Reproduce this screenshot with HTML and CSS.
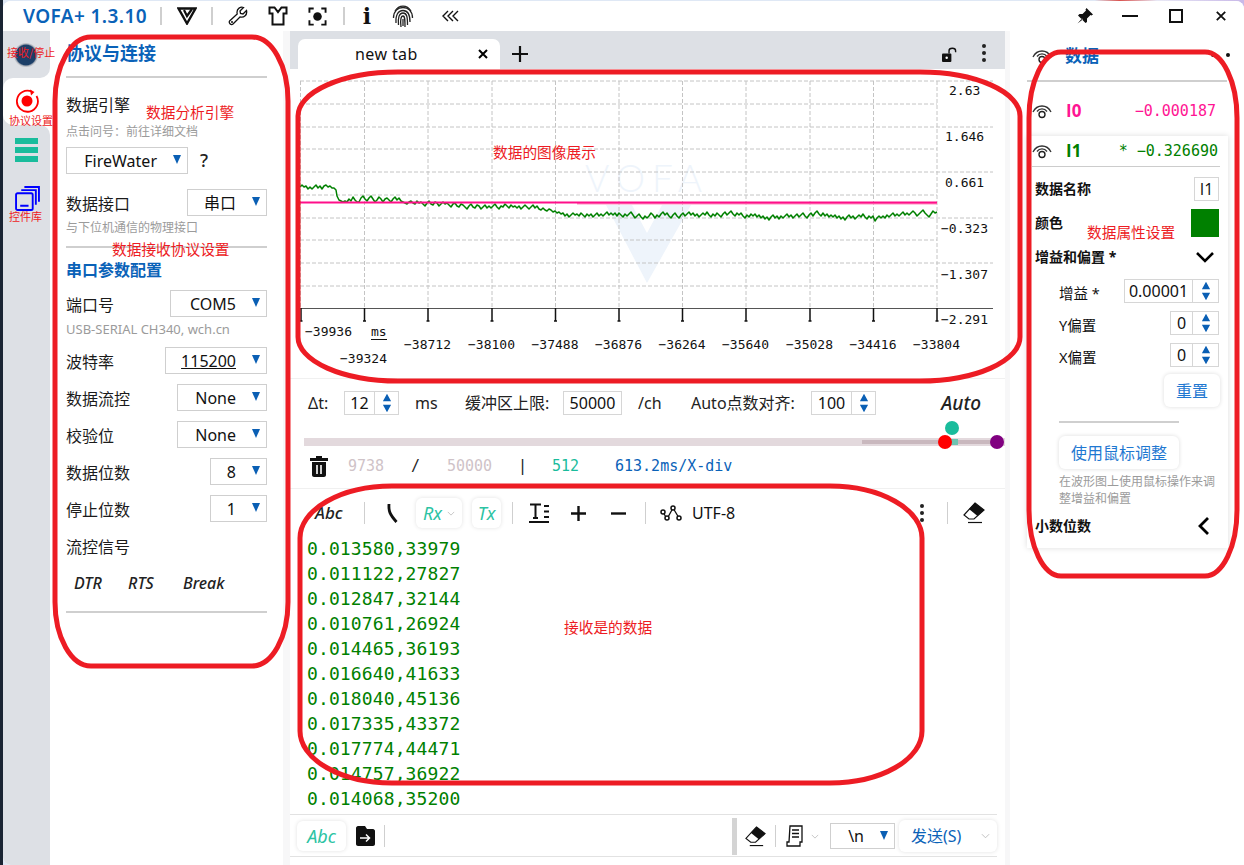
FILE: index.html
```html
<!DOCTYPE html>
<html lang="zh">
<head>
<meta charset="utf-8">
<title>VOFA+</title>
<link rel="stylesheet" href="styles.css">
</head>
<body>
<svg class="defs" width="0" height="0">
  <symbol id="eye" viewBox="0 0 20 16"><path d="M1 9C5 1 15 1 19 9M5 8.5C7.5 5 12.500 5 15 8.500" fill="none" stroke="#333" stroke-width="1.300"/><circle cx="10" cy="11.500" r="3" fill="none" stroke="#222" stroke-width="1.400"/></symbol>
  <symbol id="arrows" viewBox="0 0 10 24"><path d="M5 2 9.500 10H.5ZM5 22 .5 14H9.500Z" fill="#0a5fb4"/></symbol>
  <symbol id="eraser" viewBox="0 0 22 22"><path d="M12 1 21 8 11 17 6 17 1 13Z" fill="#fff" stroke="#111" stroke-width="1.200"/><path d="M12 1 21 8 14.500 14 6 7Z" fill="#111"/><path d="M5 20.500H19" stroke="#111" stroke-width="1.200"/></symbol>
  <symbol id="chev" viewBox="0 0 10 6"><path d="M1 1 5 5 9 1" fill="none" stroke="#bbb" stroke-width="1"/></symbol>
</svg>
<div class="window">
  <header class="titlebar">
    <span class="brand">VOFA+ 1.3.10</span>
    <span class="tsep s1"></span>
    <svg class="ti v-logo" viewBox="0 0 20 18"><path d="M1.500 1.500H18.500L10 16.500Z" fill="none" stroke="#111" stroke-width="2.400"/><path d="M7 3 10 9 15 2" fill="none" stroke="#111" stroke-width="2.200"/></svg>
    <span class="tsep s2"></span>
    <svg class="ti wrench" viewBox="0 0 20 20"><path d="M18.500 4.500 15 8 12.500 7.500 12 5 15.500 1.500C12.500.5 8.800 2.500 9 6.500L9.200 8 1.800 14.800C0 16.500 3 19.800 5 18L12 11C16 12 19.500 9 18.500 4.500Z" fill="none" stroke="#111" stroke-width="1.300"/><circle cx="4" cy="16" r="1" fill="#111"/></svg>
    <svg class="ti shirt" viewBox="0 0 20 20"><path d="M6.500 1.500H1.500V7.500H4.500V18.500H15.500V7.500H18.500V1.500H13.500L10 6Z" fill="none" stroke="#111" stroke-width="2"/></svg>
    <svg class="ti focus" viewBox="0 0 20 20"><path d="M1.500 6V1.500H6M14 1.500H18.500V6M18.500 14V18.500H14M6 18.500H1.500V14" fill="none" stroke="#111" stroke-width="2"/><circle cx="10" cy="10" r="4.500" fill="#111"/></svg>
    <span class="tsep s3"></span>
    <span class="info">i</span>
    <svg class="ti finger" viewBox="0 0 22 24"><g fill="none" stroke="#222" stroke-width="1.300"><path d="M3 7C7 .5 15 .5 19 7"/><path d="M1.500 14C1.500 7 6 3.500 11 3.500S20.500 7 20.500 14"/><path d="M4 19C3.500 11 6 6.500 11 6.500S18 10 18 18"/><path d="M6.500 21C5.800 14 7 9 11 9S15.500 13 15.500 21"/><path d="M9 23C8 16 9 12 11 12S13 16 13 23"/><path d="M11 15V22"/></g></svg>
    <svg class="ti rewind" viewBox="0 0 18 12"><path d="M6 1 1 6 6 11M11 1 6 6 11 11M16 1 11 6 16 11" fill="none" stroke="#111" stroke-width="1.400"/></svg>
    <div class="winctl">
      <svg class="pin" viewBox="0 0 16 16"><path d="M9.500 0 16 6.500 14.500 7.500 13.500 7 10 10.500 10 14 8.500 15 1 7.500 2.500 6 5.500 6 9 2.500 8.500 1.500ZM5 10.500.5 15.500 5.800 11.500Z" fill="#111"/></svg>
      <span class="w-min"></span>
      <span class="w-max"></span>
      <svg class="w-close" viewBox="0 0 10 10"><path d="M.8.8 9.200 9.200M9.200.8.8 9.200" stroke="#111" stroke-width="1.800"/></svg>
    </div>
  </header>

  <div class="main">
    <nav class="sidebar">
      <div class="side-top"><span class="rec"></span></div>
      <div class="side-active">
        <svg class="side-ico" viewBox="0 0 24 24"><path d="M17 2.800A10.500 10.500 0 1 0 21.500 7" fill="none" stroke="#f00" stroke-width="1.800"/><path d="M15 .5 19.500 3 16 6.500Z" fill="#f00"/><circle cx="12" cy="12" r="5.500" fill="#f00"/></svg>
      </div>
      <div class="side-rest">
        <div class="bars"><i></i><i></i><i></i></div>
        <svg class="lib" viewBox="0 0 24 24"><g fill="none" stroke="#00f" stroke-width="1.800"><path d="M9 1H23V15"/><path d="M6 4H20V18"/><rect x="1" y="7" width="16" height="16" rx="1.500"/><path d="M5 19H13"/></g></svg>
      </div>
    </nav>

    <section class="panel-left">
      <h2 class="title">协议与连接</h2>
      <div class="label l1">数据引擎</div>
      <div class="hint h1">点击问号：前往详细文档</div>
      <div class="fw-row">
        <div class="sel w122"><span>FireWater</span></div>
        <span class="q">?</span>
      </div>
      <div class="row r1"><span>数据接口</span><div class="sel w80"><span>串口</span></div></div>
      <div class="hint h2">与下位机通信的物理接口</div>
      <div class="rule r2"></div>
      <h3 class="sub">串口参数配置</h3>
      <div class="row r3"><span>端口号</span><div class="sel w97"><span>COM5</span></div></div>
      <div class="hint h2 wide">USB-SERIAL CH340, wch.cn</div>
      <div class="row r4"><span>波特率</span><div class="sel w102"><span class="ul">115200</span></div></div>
      <div class="row r4"><span>数据流控</span><div class="sel w90"><span>None</span></div></div>
      <div class="row r4"><span>校验位</span><div class="sel w90"><span>None</span></div></div>
      <div class="row r4"><span>数据位数</span><div class="sel w57"><span>8</span></div></div>
      <div class="row r4"><span>停止位数</span><div class="sel w57"><span>1</span></div></div>
      <div class="label l2">流控信号</div>
      <div class="signals"><span>DTR</span><span>RTS</span><span>Break</span></div>
      <div class="rule r5"></div>
    </section>

    <section class="center">
      <div class="tabbar">
        <div class="tab"><span class="tab-name">new tab</span><svg class="tab-x" viewBox="0 0 10 10"><path d="M1 1 9 9M9 1 1 9" stroke="#000" stroke-width="2"/></svg></div>
        <svg class="tab-plus" viewBox="0 0 16 16"><path d="M8 0V16M0 8H16" stroke="#111" stroke-width="2.200"/></svg>
        <svg class="lock" viewBox="0 0 16 16"><rect x="0" y="7" width="10" height="9" rx="1" fill="#111"/><path d="M7.500 7V4C7.500 .5 14.500 .5 14.500 4V5.500" fill="none" stroke="#111" stroke-width="1.500"/><circle cx="5" cy="11.500" r="1.300" fill="#fff"/></svg>
        <div class="kebab tabk"><i></i><i></i><i></i></div>
      </div>

      <svg class="chart" viewBox="290 69 715 309">
        <g class="wm"><text x="585" y="192" class="wm-t">VOFA</text><path d="M606 205H632L647 233 662 205H691L647 283Z" class="wm-v"/></g>
        <g class="grid">
          <path d="M300 81H993M300 127H993M300 172H993M300 218H993M300 263H993"/>
          <path d="M300 104H937M300 149H937M300 195H937M300 240H937M300 286H937"/>
          <path d="M300.500 81V308M364.500 81V308M428 81V308M492 81V308M555.500 81V308M619 81V308M682.500 81V308M746 81V308M810 81V308M873.500 81V308M937 81V308"/>
        </g>
        <path class="axis" d="M300 308.500H993"/>
        <path class="ticks" d="M301 308V321M364.500 308V321M428 308V321M492 308V321M555.500 308V321M619 308V321M682.500 308V321M746 308V321M810 308V321M873.500 308V321M937 308V321"/>
        <path class="feet" d="M299.500 321H302.500M363 321H366M426.500 321H429.500M490.500 321H493.500M554 321H557M617.500 321H620.500M681 321H684M744.500 321H747.500M808.500 321H811.500M872 321H875M935.500 321H938.500"/>
        <polyline class="trace" points="300,187 302,185 304,187 306,186 308,189 310,187 312,189 314,187 316,185 318,188 320,186 322,189 324,186 326,185 328,187 330,186 332,188 334,188 336,190 337,196 339,200 341,201 343,202 345,201 347,202 349,199 351,201 353,197 355,200 357,202 359,202 361,198 363,196 365,199 367,201 369,198 371,196 373,199 375,202 377,200 379,197 381,199 383,202 385,199 387,198 389,200 391,202 393,199 395,197 397,200 399,198 401,201 403,202 405,203 407,204 409,202 411,201 413,203 415,204 417,201 419,203 421,202 423,204 425,206 427,203 429,201 431,204 433,205 435,202 437,203 439,206 441,204 443,202 445,204 447,203 449,205 451,207 453,204 455,203 457,206 459,207 461,204 463,205 465,207 467,209 469,206 471,204 473,207 475,208 477,205 479,206 481,209 483,207 485,205 487,208 489,206 491,208 493,206 495,204 497,207 499,209 501,206 503,207 505,204 507,206 509,208 511,205 513,207 515,206 517,208 519,206 521,209 523,207 525,205 527,207 529,209 531,207 533,205 535,208 537,206 539,209 541,210 543,208 545,210 547,211 549,209 551,210 553,212 555,211 557,213 559,212 561,214 563,213 565,216 567,214 569,217 571,215 573,213 575,215 577,214 579,216 581,213 583,215 585,217 587,214 589,216 591,214 593,217 595,215 597,213 599,216 601,214 603,216 605,214 607,212 609,215 611,213 613,215 615,213 617,216 619,213 621,215 623,217 625,214 627,216 629,214 631,212 633,215 635,218 637,216 639,214 641,217 643,219 645,216 647,218 649,216 651,213 653,215 655,218 657,215 659,217 661,214 663,212 665,215 667,213 669,216 671,218 673,215 675,213 677,216 679,218 681,215 683,213 685,216 687,214 689,212 691,215 693,213 695,216 697,214 699,217 701,215 703,213 705,215 707,212 709,215 711,217 713,214 715,216 717,213 719,215 721,217 723,214 725,212 727,215 729,213 731,211 733,214 735,216 737,213 739,215 741,213 743,216 745,218 747,215 749,217 751,214 753,216 755,214 757,217 759,215 761,218 763,216 765,219 767,217 769,220 771,217 773,215 775,218 777,216 779,219 781,216 783,218 785,216 787,214 789,217 791,215 793,218 795,216 797,214 799,217 801,215 803,213 805,216 807,218 809,215 811,213 813,216 815,213 817,211 819,214 821,216 823,213 825,216 827,214 829,217 831,215 833,217 835,215 837,218 839,216 841,219 843,217 845,220 847,217 849,215 851,218 853,216 855,219 857,217 859,215 861,217 863,214 865,217 867,219 869,216 871,218 873,216 875,221 877,218 879,216 881,218 883,216 885,218 887,215 889,217 891,215 893,213 895,216 897,214 899,216 901,214 903,212 905,215 907,213 909,215 911,213 913,211 915,213 917,216 919,214 921,212 923,210 925,213 927,215 929,217 931,214 933,211 935,213 937,212"/>
        <path class="zero2" d="M577 203.500H937"/>
        <path class="zero" d="M300 202.500H937"/>
        <g class="ylab">
          <text x="949" y="95">2.63</text><text x="945" y="141">1.646</text><text x="945" y="187">0.661</text>
          <text x="941" y="233">−0.323</text><text x="941" y="279">−1.307</text><text x="941" y="324">−2.291</text>
        </g>
        <g class="xlab">
          <text x="305" y="336">−39936</text><text x="340" y="363">−39324</text>
          <text x="404" y="349">−38712</text><text x="468" y="349">−38100</text><text x="531.500" y="349">−37488</text><text x="595" y="349">−36876</text><text x="658.500" y="349">−36264</text><text x="722" y="349">−35640</text><text x="786" y="349">−35028</text><text x="849.500" y="349">−34416</text><text x="913" y="349">−33804</text>
        </g>
        <text x="371" y="336" class="ms">ms</text>
        <path class="ms-ul" d="M371 339.500H387"/>
      </svg>

      <div class="ctrl">
        <span class="c-dt">Δt:</span>
        <div class="spin c-spin1"><span class="sv w34">12</span><svg class="ar" viewBox="0 0 10 24"><use href="#arrows"/></svg></div>
        <span class="c-ms">ms</span>
        <span class="c-buf">缓冲区上限:</span>
        <div class="box c-in">50000</div>
        <span class="c-ch">/ch</span>
        <span class="c-auto">Auto点数对齐:</span>
        <div class="spin c-spin2"><span class="sv w40">100</span><svg class="ar" viewBox="0 0 10 24"><use href="#arrows"/></svg></div>
        <span class="auto-btn">Auto</span>
      </div>

      <div class="slider">
        <div class="track"></div>
        <div class="track-in"></div>
        <div class="track-te"></div>
        <span class="dot d-teal"></span><span class="dot d-red"></span><span class="dot d-pur"></span>
      </div>

      <div class="stats">
        <svg class="trash" viewBox="0 0 18 22"><path d="M6 1H12V3H18V6H0V3H6ZM2 7H16V20C16 21 15 22 14 22H4C3 22 2 21 2 20Z" fill="#111"/><path d="M7 10V19M11 10V19" stroke="#fff" stroke-width="1.600"/></svg>
        <span class="st-a">9738</span><span class="st-s">/</span><span class="st-b">50000</span><span class="st-p">|</span><span class="st-c">512</span><span class="st-d">613.2ms/X-div</span>
      </div>

      <div class="toolbar">
        <span class="abc">Abc</span>
        <span class="vs m20"></span>
        <svg class="bend m22" viewBox="0 0 12 20"><path d="M2 1C1.500 8 2.500 11 9.500 19" fill="none" stroke="#111" stroke-width="2.800"/></svg>
        <div class="rx m17"><span class="tl">Rx</span><svg class="cv" viewBox="0 0 10 6"><use href="#chev"/></svg></div>
        <div class="tx m10"><span class="tl">Tx</span></div>
        <span class="vs m11"></span>
        <svg class="tfmt m16" viewBox="0 0 20 20"><path d="M1 1.500H12M6.500 1.500V15M4 15H9M15 3H20M15 8.500H20M15 14H20M0 19H20" fill="none" stroke="#111" stroke-width="2"/></svg>
        <svg class="pm m22" viewBox="0 0 15 15"><path d="M7.500 0V15M0 7.500H15" stroke="#111" stroke-width="2.400"/></svg>
        <svg class="pm m25" viewBox="0 0 15 15"><path d="M0 7.500H15" stroke="#111" stroke-width="2.400"/></svg>
        <span class="vs m19"></span>
        <svg class="nodes m14" viewBox="0 0 22 16"><path d="M3 7 7 14 13 3 19 13" fill="none" stroke="#111" stroke-width="1.300"/><g fill="#fff" stroke="#111" stroke-width="1.500"><circle cx="3" cy="7" r="2"/><circle cx="7" cy="13" r="2"/><circle cx="13" cy="3" r="2"/><circle cx="19" cy="13" r="2"/></g></svg>
        <span class="utf">UTF-8</span>
        <div class="kebab tbk"><i></i><i></i><i></i></div>
        <span class="vs m21b"></span>
        <svg class="eras m15" viewBox="0 0 22 22"><use href="#eraser"/></svg>
      </div>

      <div class="log">
        <div>0.013580,33979</div><div>0.011122,27827</div><div>0.012847,32144</div><div>0.010761,26924</div><div>0.014465,36193</div><div>0.016640,41633</div><div>0.018040,45136</div><div>0.017335,43372</div><div>0.017774,44471</div><div>0.014757,36922</div><div>0.014068,35200</div>
      </div>

      <div class="sendbar">
        <div class="abc-btn"><span class="tl">Abc</span></div>
        <svg class="sendfile" viewBox="0 0 20 20"><path d="M1 2C1 1 2 0 3 0H10L12 3H18C19 3 20 4 20 5V18C20 19 19 20 18 20H3C2 20 1 19 1 18Z" fill="#111"/><path d="M5 12H14M11 8.500 14.500 12 11 15.500" fill="none" stroke="#fff" stroke-width="1.500"/></svg>
        <span class="vs m9"></span>
        <span class="grip"></span>
        <svg class="eras m8" viewBox="0 0 22 22"><use href="#eraser"/></svg>
        <span class="vs m9"></span>
        <svg class="doc m10" viewBox="0 0 17 22"><path d="M4 1H16V17H14V21H1V17H3ZM14 17V21" fill="none" stroke="#111" stroke-width="1.300"/><path d="M6 5H13M6 8.500H13M6 12H13" stroke="#111" stroke-width="1.300"/></svg>
        <svg class="cv m8" viewBox="0 0 10 6"><use href="#chev"/></svg>
        <div class="sel nl"><span>\n</span></div>
        <div class="send"><span>发送(S)</span><svg class="cv2" viewBox="0 0 10 6"><use href="#chev"/></svg></div>
      </div>
    </section>

    <aside class="panel-right">
      <div class="rp-head"><svg class="eye" viewBox="0 0 20 16"><use href="#eye"/></svg><span class="rp-title">数据</span><span class="rp-dots"><i></i><i></i></span></div>
      <div class="ch ch0"><svg class="eye" viewBox="0 0 20 16"><use href="#eye"/></svg><b class="chn pink">I0</b><span class="chv pink">−0.000187</span></div>
      <div class="card">
        <div class="ch ch1"><svg class="eye" viewBox="0 0 20 16"><use href="#eye"/></svg><b class="chn green">I1</b><span class="chv green">* −0.326690</span></div>
        <div class="prow p-name"><b>数据名称</b><div class="box name-in">I1</div></div>
        <div class="prow p-color"><b>颜色</b><span class="swatch"></span></div>
        <div class="prow p-gain"><b>增益和偏置 *</b><svg class="bigchev" viewBox="0 0 20 12"><path d="M2 2 10 10 18 2" fill="none" stroke="#000" stroke-width="2.600"/></svg></div>
        <div class="sub-rows">
          <div class="srow s-g"><span>增益 *</span><div class="spin"><span class="sv w68">0.00001</span><svg class="ar" viewBox="0 0 10 24"><use href="#arrows"/></svg></div></div>
          <div class="srow"><span>Y偏置</span><div class="spin"><span class="sv w22">0</span><svg class="ar" viewBox="0 0 10 24"><use href="#arrows"/></svg></div></div>
          <div class="srow"><span>X偏置</span><div class="spin"><span class="sv w22">0</span><svg class="ar" viewBox="0 0 10 24"><use href="#arrows"/></svg></div></div>
          <div class="reset-row"><div class="btn reset">重置</div></div>
          <div class="rule srule"></div>
          <div class="btn mouse">使用鼠标调整</div>
          <div class="rhint">在波形图上使用鼠标操作来调整增益和偏置</div>
        </div>
        <div class="prow p-dec"><b>小数位数</b><svg class="leftchev" viewBox="0 0 12 20"><path d="M10 2 2 10 10 18" fill="none" stroke="#000" stroke-width="2.800"/></svg></div>
      </div>
    </aside>
  </div>
</div>

<svg class="marks" viewBox="0 0 1244 865">
  <rect x="55" y="37" width="233" height="629" rx="36" ry="64"/>
  <rect x="298" y="72" width="722" height="309" rx="100" ry="44"/>
  <rect x="300" y="486" width="622" height="297" rx="92" ry="52"/>
  <rect x="1029" y="52" width="208" height="524" rx="32" ry="66"/>
</svg>
<span class="note n1">接收/停止</span>
<span class="note n2">协议设置</span>
<span class="note n3">控件库</span>
<span class="note big n4">数据分析引擎</span>
<span class="note big n5">数据接收协议设置</span>
<span class="note big n6">数据的图像展示</span>
<span class="note big n7">数据属性设置</span>
<span class="note big n8">接收是的数据</span>
</body>
</html>
```
FILE: styles.css
```css
* { box-sizing: border-box; }
html, body { margin: 0; height: 100%; overflow: hidden; }
body {
  position: relative;
  width: 1244px;
  height: 865px;
  background:
    linear-gradient(90deg, #1a2433 3px, transparent 3px),
    linear-gradient(90deg, #dfe8f5 0, #dfe8f5 88%, #d9534f 90%, #e8e8f5 93%, #c8b8e8 100%);
  font-family: "Noto Sans", "Noto Sans CJK SC", sans-serif;
  font-size: 16px;
  color: #1b1b1b;
}
.defs { position: absolute; }
.window {
  margin: 1px 0 0 3px;
  width: 1241px;
  height: 864px;
  background: #fff;
  border-radius: 8px 8px 0 8px;
  display: flex;
  flex-direction: column;
  overflow: hidden;
}

/* title bar */
.titlebar { height: 30px; flex: none; display: flex; align-items: center; background: #fff; }
.brand { margin-left: 20px; width: 125px; font-size: 19px; letter-spacing: .4px; font-weight: 600; color: #0a62b8; white-space: nowrap; line-height: 28px; }
.tsep { width: 2px; height: 18px; background: #cfcfcf; }
.s1 { margin-left: 12px; }
.s2 { margin-left: 14px; }
.s3 { margin-left: 16px; }
.ti { display: block; flex: none; }
.v-logo { width: 20px; height: 18px; margin-left: 15px; }
.wrench { width: 20px; height: 20px; margin-left: 15px; }
.shirt { width: 20px; height: 20px; margin-left: 20px; }
.focus { width: 19px; height: 19px; margin-left: 20px; }
.info { width: 12px; margin-left: 16px; font-family: "DejaVu Serif", serif; font-weight: 700; font-size: 22px; line-height: 26px; color: #111; text-align: center; }
.finger { width: 22px; height: 24px; margin-left: 19px; }
.rewind { width: 18px; height: 12px; margin-left: 28px; }
.winctl { margin-left: auto; display: flex; align-items: center; }
.pin { width: 16px; height: 16px; }
.w-min { width: 16px; height: 2px; background: #111; margin-left: 29px; }
.w-max { width: 14px; height: 14px; border: 2px solid #111; margin-left: 31px; }
.w-close { width: 10px; height: 10px; margin-left: 33px; margin-right: 18px; }

.main { flex: 1; display: flex; min-height: 0; }

/* sidebar */
.sidebar { width: 47px; flex: none; display: flex; flex-direction: column; background: linear-gradient(90deg, #dde0e5 34px, #fff 34px); }
.side-top { height: 47px; background: #dde0e5; border-radius: 0 0 10px 0; display: flex; padding: 12px 0 0 11px; }
.rec { width: 24px; height: 24px; border-radius: 50%; background: radial-gradient(circle, #1c3f68 0, #1c3f68 58%, #b9bcc2 66%, #d0d2d7 100%); }
.side-active { height: 47px; background: #fff; border-radius: 10px 0 0 10px; display: flex; align-items: flex-start; padding: 11px 0 0 12px; }
.side-ico { width: 24px; height: 24px; }
.side-rest { flex: 1; background: #dde0e5; border-radius: 0 10px 0 10px; padding: 13px 0 0 12px; }
.bars { width: 23px; display: flex; flex-direction: column; gap: 3px; }
.bars i { display: block; height: 6px; background: #1abc9c; }
.lib { display: block; width: 25px; height: 25px; margin-top: 24px; }

/* left panel */
.panel-left { width: 233px; flex: none; padding: 0 16px; background: #fff; }
.title { margin: 0; height: 47px; line-height: 45px; font-size: 18px; font-weight: 700; color: #0a62b8; border-bottom: 2px solid #cfcfcf; }
.label { line-height: 24px; }
.l1 { margin-top: 15px; }
.l2 { margin-top: 13px; }
.hint { font-size: 12px; line-height: 16px; color: #9b9b9b; }
.h1 { margin-top: 7px; }
.h2 { margin-top: 4px; }
.wide { font-size: 13px; }
.fw-row { display: flex; align-items: center; margin-top: 7px; }
.q { margin-left: 12px; font-size: 18px; line-height: 27px; font-weight: 500; color: #222; }
.row { display: flex; justify-content: space-between; align-items: center; height: 27px; }
.r1 { margin-top: 15px; }
.r3 { margin-top: 8px; }
.r4 { margin-top: 10px; }
.rule { height: 2px; background: #cfcfcf; }
.r2 { margin-top: 10px; }
.r5 { margin-top: 16px; }
.sub { margin: 10px 0 8px; font-size: 16px; line-height: 24px; font-weight: 700; color: #0a62b8; }
.sel { height: 27px; border: 1px solid #cfcfcf; display: flex; align-items: center; justify-content: flex-end; padding-right: 6px; line-height: 24px; color: #111; }
.sel::after { content: ""; margin-left: 16px; margin-bottom: 2px; border-style: solid; border-width: 9px 4.500px 0; border-color: #0a5fb4 transparent transparent; }
.w122 { width: 122px; }
.w122::after { margin-left: 16px; }
.w80 { width: 80px; }
.w97 { width: 97px; }
.w102 { width: 102px; }
.w90 { width: 90px; }
.w57 { width: 57px; }
.ul { text-decoration: underline; }
.signals { margin-top: 12px; display: flex; padding-left: 8px; height: 24px; line-height: 24px; font-style: italic; font-weight: 500; color: #222; }
.signals span:nth-child(1) { width: 54px; }
.signals span:nth-child(2) { width: 55px; }

/* center */
.center { margin-left: 7px; width: 715px; flex: none; display: flex; flex-direction: column; background: #fff; box-shadow: -7px 0 0 #f7f7f8, 5px 0 0 #f7f7f8; }
.tabbar { height: 38px; flex: none; background: #dde0e5; display: flex; align-items: flex-end; padding-left: 8px; position: relative; }
.tab { width: 202px; height: 30px; background: #fff; border-radius: 7px 7px 0 0; display: flex; align-items: center; padding-left: 57px; }
.tab-name { width: 123px; line-height: 30px; color: #111; letter-spacing: .4px; }
.tab-x { width: 10px; height: 10px; }
.tab-plus { width: 16px; height: 16px; margin: 0 0 7px 12px; }
.lock { width: 15px; height: 15px; margin: 0 0 7px auto; }
.kebab { display: flex; flex-direction: column; gap: 3px; width: 4px; }
.kebab i { display: block; width: 4px; height: 4px; border-radius: 50%; background: #222; }
.tabk { margin: 0 19px 7px 25px; }
.chart { display: block; width: 715px; height: 309px; flex: none; background: #fff; }
.wm-t { font-family: "Lato", sans-serif; font-weight: 300; font-size: 37px; letter-spacing: 7px; fill: #eef4fb; }
.wm-v { fill: #eef4fb; }
.grid path { fill: none; stroke: #c4c4c4; stroke-width: 1; stroke-dasharray: 4 2; }
.axis { stroke: #555; stroke-width: 1; }
.ticks { stroke: #111; stroke-width: 1.500; }
.feet { stroke: #111; stroke-width: 1.500; }
.trace { fill: none; stroke: #008000; stroke-width: 1.500; stroke-linejoin: round; }
.zero { fill: none; stroke: #ff0f8a; stroke-width: 2; }
.zero2 { fill: none; stroke: #ff8fc0; stroke-width: 2; }
.ylab text, .xlab text, .ms { font-family: "DejaVu Sans Mono", monospace; font-size: 13px; fill: #111; }
.ms-ul { stroke: #111; stroke-width: 1; }

.ctrl { height: 49px; flex: none; border-top: 1px solid #f0f0f0; display: flex; align-items: center; padding-left: 18px; font-size: 16px; line-height: 24px; color: #222; }
.spin { display: flex; height: 24px; border: 1px solid #d6d6d6; align-items: center; font-size: 16px; color: #111; }
.sv { display: block; text-align: center; line-height: 22px; border-right: 1px solid #d6d6d6; height: 22px; }
.ar { display: block; width: 10px; height: 22px; margin: 0 6px 0 7px; }
.box { height: 24px; border: 1px solid #d6d6d6; line-height: 22px; text-align: center; font-size: 16px; color: #111; }
.w34 { width: 30px; }
.w40 { width: 40px; }
.w68 { width: 68px; }
.w22 { width: 22px; }
.c-spin1 { margin-left: 14px; }
.c-dt { width: 22px; }
.c-ms { margin-left: 16px; width: 24px; }
.c-buf { margin-left: 26px; width: 84px; white-space: nowrap; }
.c-in { margin-left: 14px; width: 59px; }
.c-ch { margin-left: 16px; width: 24px; }
.c-auto { margin-left: 29px; width: 105px; white-space: nowrap; }
.c-spin2 { margin-left: 15px; }
.auto-btn { margin-left: auto; margin-right: 24px; font-size: 19px; font-weight: 500; font-style: italic; color: #222; }

.slider { height: 27px; flex: none; position: relative; }
.track { position: absolute; left: 14px; right: 0; top: 11px; height: 8px; background: #e3d9dd; }
.track-in { position: absolute; left: 572px; right: 8px; top: 13px; height: 4px; background: #c9b8be; }
.track-te { position: absolute; left: 660px; width: 8px; top: 12px; height: 6px; background: #6fc4b2; }
.dot { position: absolute; width: 14px; height: 14px; border-radius: 50%; }
.d-teal { left: 655px; top: -6px; background: #1abc9c; }
.d-red { left: 648px; top: 8px; background: #f00; }
.d-pur { left: 700px; top: 8px; background: #800080; }

.stats { height: 35px; flex: none; border-bottom: 1px solid #f0f0f0; display: flex; align-items: flex-start; padding: 1px 0 0 20px; font-family: "DejaVu Sans Mono", monospace; font-size: 15px; line-height: 22px; white-space: nowrap; }
.trash { width: 18px; height: 22px; }
.st-a { margin-left: 20px; width: 63px; color: #cfc3c8; }
.st-s { width: 36px; color: #222; }
.st-b { width: 71px; color: #cfc3c8; }
.st-p { width: 34px; color: #222; }
.st-c { width: 63px; color: #1abc9c; }
.st-d { color: #0a62b8; }

.toolbar { height: 46px; flex: none; display: flex; align-items: center; padding: 2px 0 0 25px; color: #111; }
.abc { font-size: 17px; font-style: italic; font-weight: 500; width: 29px; line-height: 24px; color: #222; }
.vs { width: 1px; height: 22px; background: #cfcfcf; flex: none; }
.m8 { margin-left: 8px; }
.m9 { margin-left: 9px; }
.m10 { margin-left: 10px; }
.m11 { margin-left: 11px; }
.m14 { margin-left: 14px; }
.m15 { margin-left: 15px; }
.m16 { margin-left: 16px; }
.m17 { margin-left: 17px; }
.m19 { margin-left: 19px; }
.m20 { margin-left: 20px; }
.m21b { margin-left: 23px; }
.m22 { margin-left: 22px; }
.m25 { margin-left: 25px; }
.bend { width: 12px; height: 20px; }
.rx, .tx { height: 30px; border-radius: 6px; background: #fff; box-shadow: 0 0 4px rgba(0,0,0,.12); display: flex; align-items: center; justify-content: center; }
.rx { width: 46px; gap: 5px; }
.tx { width: 29px; }
.tl { font-size: 18px; font-style: italic; color: #2cc3a3; line-height: 24px; }
.cv { width: 8px; height: 5px; flex: none; }
.tfmt { width: 20px; height: 20px; }
.pm { width: 15px; height: 15px; }
.nodes { width: 22px; height: 16px; }
.utf { margin-left: 10px; font-size: 16px; line-height: 24px; }
.tbk { margin-left: auto; }
.eras { width: 22px; height: 22px; }
.toolbar .eras { margin-right: 20px; }

.log { height: 279px; flex: none; padding: 1px 0 0 17px; font-family: "DejaVu Sans Mono", monospace; font-size: 18px; line-height: 25px; letter-spacing: .12px; color: #008000; }

.sendbar { height: 43px; flex: none; border-top: 1px solid #e2e2e2; border-bottom: 1px solid #e2e2e2; display: flex; align-items: center; padding: 1px 0 0 7px; margin-right: 8px; }
.abc-btn { width: 49px; height: 30px; border-radius: 6px; box-shadow: 0 0 4px rgba(0,0,0,.12); display: flex; align-items: center; justify-content: center; }
.sendfile { width: 20px; height: 20px; margin-left: 9px; }
.grip { width: 5px; height: 37px; background: #d4d4d4; margin-left: 347px; }
.sendbar .eras { width: 21px; height: 21px; }
.doc { width: 17px; height: 22px; }
.nl { width: 65px; height: 26px; margin-left: 11px; }
.nl::after { margin-left: 16px; }
.send { width: 98px; height: 32px; margin-left: 4px; border-radius: 6px; box-shadow: 0 0 4px rgba(0,0,0,.12); display: flex; align-items: center; padding-left: 12px; color: #0a62b8; font-size: 16px; line-height: 24px; }
.cv2 { width: 9px; height: 6px; margin-left: 20px; }

/* right panel */
.panel-right { margin-left: 5px; flex: 1; padding-left: 17px; background: #fff; }
.eye { display: block; width: 20px; height: 16px; flex: none; }
.rp-head { width: 200px; height: 51px; border-bottom: 2px solid #cfcfcf; display: flex; align-items: center; padding: 0 0 0 5px; }
.rp-title { margin-left: 13px; font-size: 17px; font-weight: 700; color: #0a62b8; line-height: 24px; }
.rp-dots { display: flex; gap: 11px; margin-left: auto; margin-right: -3px; margin-top: -2px; }
.rp-dots i { display: block; width: 4px; height: 4px; border-radius: 50%; background: #111; }
.ch { display: flex; align-items: center; padding-left: 5px; }
.ch0 { height: 54px; width: 200px; padding: 4px 11px 0 5px; }
.chn { margin-left: 14px; font-family: "Open Sans", sans-serif; font-size: 17px; line-height: 24px; }
.chv { margin-left: auto; font-family: "DejaVu Sans Mono", monospace; font-size: 15px; line-height: 24px; white-space: nowrap; }
.pink { color: #ff1493; }
.green { color: #008000; }
.card { width: 201px; height: 412px; background: #fff; box-shadow: 0 0 6px rgba(0,0,0,.14); padding: 0 8px; }
.ch1 { height: 31px; border-bottom: 1px solid #ccc; padding: 0 2px 0 0; margin-left: -3px; }
.prow { display: flex; justify-content: space-between; align-items: center; font-size: 14px; color: #111; line-height: 24px; }
.prow b { font-weight: 700; }
.p-name { height: 24px; margin-top: 10px; }
.name-in { width: 25px; margin-right: 1px; font-family: "Open Sans", sans-serif; font-size: 16px; }
.p-color { height: 28px; margin-top: 8px; }
.swatch { width: 28px; height: 28px; background: #008000; margin-right: 1px; }
.p-gain { height: 24px; margin-top: 8px; }
.bigchev { width: 20px; height: 12px; margin-right: 5px; }
.sub-rows { margin: 10px 0 0 24px; }
.srow { display: flex; justify-content: space-between; align-items: center; height: 24px; margin-top: 8px; padding-right: 1px; font-size: 14.500px; color: #111; line-height: 24px; }
.srow > span { padding-top: 3px; }
.s-g { margin-top: 0; }
.srow .spin { height: 24px; }
.srow .ar { margin: 0 7px 0 8px; }
.reset-row { display: flex; justify-content: flex-end; margin-top: 7px; }
.btn { height: 33px; border-radius: 6px; background: #fff; box-shadow: 0 0 4px rgba(0,0,0,.14); color: #1f78d1; display: flex; align-items: center; justify-content: center; font-size: 16px; line-height: 24px; }
.reset { width: 56px; }
.srule { width: 120px; margin-top: 14px; }
.mouse { width: 120px; margin-top: 13px; }
.rhint { margin-top: 4px; width: 160px; font-size: 12px; line-height: 17px; color: #9b9b9b; }
.p-dec { height: 24px; margin-top: 7px; }
.leftchev { width: 12px; height: 20px; margin-right: 10px; }

/* red review annotations over the screenshot */
.marks { position: absolute; left: 0; top: 0; width: 1244px; height: 865px; pointer-events: none; }
.marks rect { fill: none; stroke: #ed1c24; stroke-width: 5; }
.note { position: absolute; color: #ed1c24; font-family: "Noto Sans CJK SC", sans-serif; font-size: 11px; line-height: 14px; white-space: nowrap; }
.big { font-size: 14.700px; line-height: 18px; }
.n1 { left: 7px; top: 45px; }
.n2 { left: 9px; top: 113px; }
.n3 { left: 9px; top: 209px; }
.n4 { left: 146px; top: 103px; }
.n5 { left: 112px; top: 240px; }
.n6 { left: 493px; top: 143px; }
.n7 { left: 1087px; top: 223px; }
.n8 { left: 564px; top: 618px; }
```
